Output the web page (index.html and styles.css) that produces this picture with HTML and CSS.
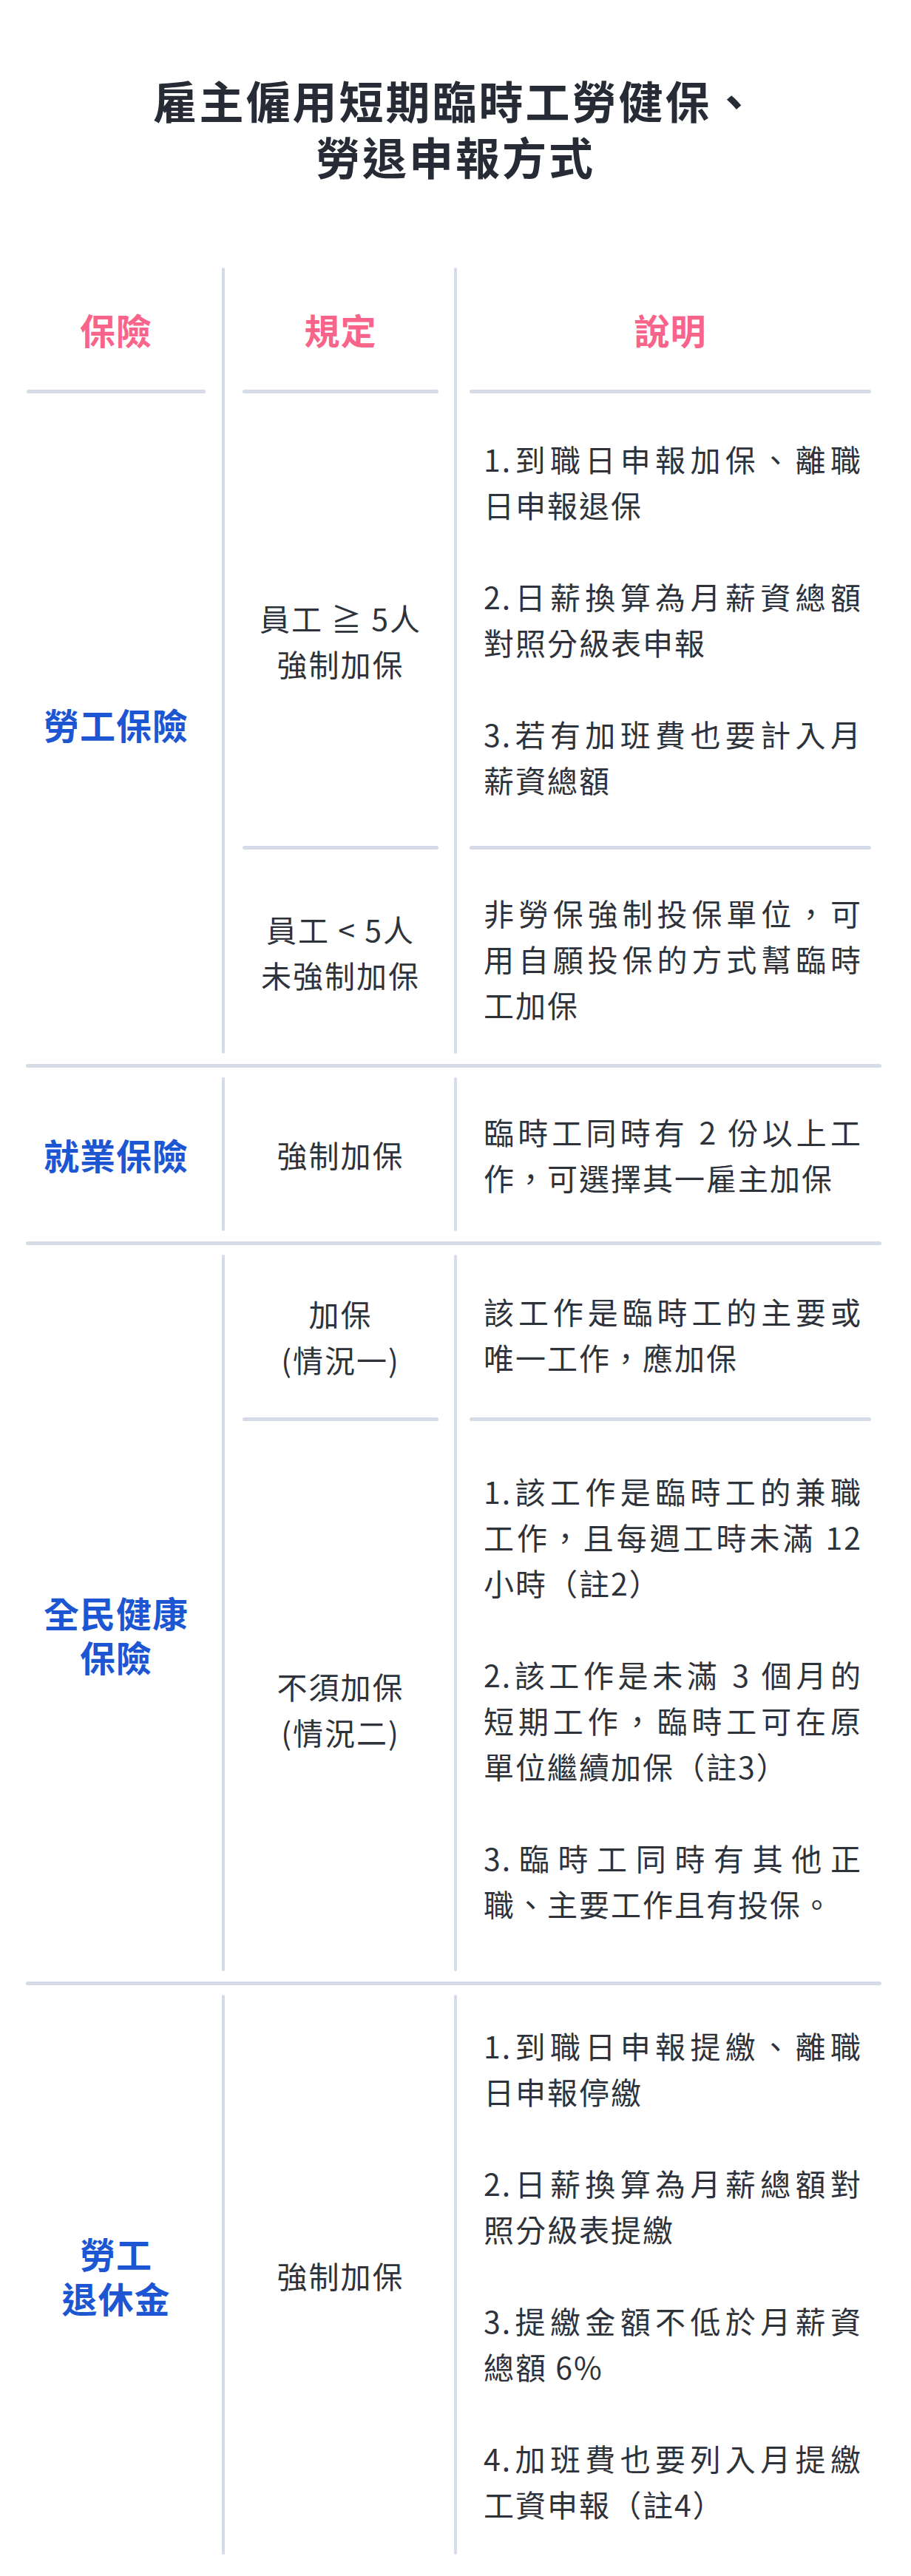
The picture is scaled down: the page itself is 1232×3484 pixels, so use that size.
FILE: index.html
```html
<!DOCTYPE html>
<html lang="zh-Hant">
<head>
<meta charset="utf-8">
<title>雇主僱用短期臨時工勞健保、勞退申報方式</title>
<link rel="stylesheet" href="styles.css">
</head>
<body>
<main class="page">
  <h1 class="title">雇主僱用短期臨時工勞健保、<br>勞退申報方式</h1>

  <section class="table">
    <div class="group g1">
      <div class="vl a"></div>
      <div class="vl b"></div>

      <div class="c1 r1 head">保險</div>
      <div class="c2 r1 head">規定</div>
      <div class="c3 r1 head">說明</div>
      <div class="hl x1 r2"></div>
      <div class="hl x2 r2"></div>
      <div class="hl x3 r2"></div>

      <div class="c1 r3to5 name">勞工保險</div>

      <div class="c2 r3 rule shift-lg">員工 ≧ 5人<br>強制加保</div>
      <div class="c3 r3 txt p-1a">
        <p><span>1.到職日申報加保、離職</span><span>日申報退保</span></p>
        <p><span>2.日薪換算為月薪資總額</span><span>對照分級表申報</span></p>
        <p><span>3.若有加班費也要計入月</span><span>薪資總額</span></p>
      </div>
      <div class="hl x2 r4"></div>
      <div class="hl x3 r4"></div>

      <div class="c2 r5 rule">員工 &lt; 5人<br>未強制加保</div>
      <div class="c3 r5 txt p-1b">
        <p><span>非勞保強制投保單位，可</span><span>用自願投保的方式幫臨時</span><span>工加保</span></p>
      </div>
    </div>

    <div class="rowline"></div>

    <div class="group g2">
      <div class="vl a"></div>
      <div class="vl b"></div>
      <div class="c1 r1 name">就業保險</div>
      <div class="c2 r1 rule">強制加保</div>
      <div class="c3 r1 txt p-2">
        <p><span>臨時工同時有 2 份以上工</span><span>作，可選擇其一雇主加保</span></p>
      </div>
    </div>

    <div class="rowline"></div>

    <div class="group g3">
      <div class="vl a"></div>
      <div class="vl b"></div>
      <div class="c1 rall name shift-lg">全民健康<br>保險</div>

      <div class="c2 r1 rule">加保<br>(情況一)</div>
      <div class="c3 r1 txt p-3a">
        <p><span>該工作是臨時工的主要或</span><span>唯一工作，應加保</span></p>
      </div>
      <div class="hl x2 r2"></div>
      <div class="hl x3 r2"></div>

      <div class="c2 r3 rule shift-sm">不須加保<br>(情況二)</div>
      <div class="c3 r3 txt p-3b">
        <p><span>1.該工作是臨時工的兼職</span><span>工作，且每週工時未滿 12</span><span>小時（註2）</span></p>
        <p><span>2.該工作是未滿 3 個月的</span><span>短期工作，臨時工可在原</span><span>單位繼續加保（註3）</span></p>
        <p><span>3.臨時工同時有其他正</span><span>職、主要工作且有投保。</span></p>
      </div>
    </div>

    <div class="rowline"></div>

    <div class="group g4">
      <div class="vl a"></div>
      <div class="vl b"></div>
      <div class="c1 r1 name">勞工<br>退休金</div>
      <div class="c2 r1 rule">強制加保</div>
      <div class="c3 r1 txt p-4">
        <p><span>1.到職日申報提繳、離職</span><span>日申報停繳</span></p>
        <p><span>2.日薪換算為月薪總額對</span><span>照分級表提繳</span></p>
        <p><span>3.提繳金額不低於月薪資</span><span>總額 6%</span></p>
        <p><span>4.加班費也要列入月提繳</span><span>工資申報（註4）</span></p>
      </div>
    </div>
  </section>
</main>
</body>
</html>
```

FILE: styles.css
```css
:root {
  --ink: #262b36;
  --text: #2d323b;
  --pink: #f9648a;
  --blue: #1d56d3;
  --line: #d5dce8;
}

* { box-sizing: border-box; }

html, body {
  margin: 0;
  padding: 0;
  background: #ffffff;
}

body {
  font-family: "Noto Sans CJK TC", "Noto Sans", "Liberation Sans", sans-serif;
  color: var(--text);
  text-autospace: no-autospace;
}

.page {
  width: 1232px;
  padding-bottom: 29px;
}

.title {
  margin: 0 0 113px;
  padding-top: 97px;
  font-size: 60px;
  line-height: 76px;
  font-weight: 700;
  letter-spacing: 3px;
  color: var(--ink);
  text-align: center;
}

.table {
  margin: 0 40px 0 35px;
}

.group {
  display: grid;
  grid-template-columns: 265px 4px 310px 4px 574px;
}

.g1 { grid-template-rows: 165px 5px auto 5px auto; }
.g2 { grid-template-rows: auto; }
.g3 { grid-template-rows: auto 5px auto; }
.g4 { grid-template-rows: auto; }

.group > * { min-width: 0; }

.vl {
  grid-row: 1 / -1;
  background: var(--line);
  border-radius: 2px;
}
.vl.a { grid-column: 2; }
.vl.b { grid-column: 4; }

.r1 { grid-row: 1; }
.r2 { grid-row: 2; }
.r3 { grid-row: 3; }
.r4 { grid-row: 4; }
.r5 { grid-row: 5; }
.r3to5 { grid-row: 3 / 6; }
.rall { grid-row: 1 / -1; }

.c1 { grid-column: 1; margin: 0 22px 0 1px; }
.c2 { grid-column: 3; margin: 0 21px 0 24px; }
.c3 { grid-column: 5; margin: 0 14px 0 17px; }

.hl {
  height: 5px;
  background: var(--line);
  border-radius: 3px;
}
.hl.x1 { grid-column: 1; margin: 0 22px 0 1px; }
.hl.x2 { grid-column: 3; margin: 0 21px 0 24px; }
.hl.x3 { grid-column: 5; margin: 0 14px 0 17px; }

.head,
.name,
.rule {
  display: flex;
  flex-direction: column;
  justify-content: center;
  align-items: center;
  text-align: center;
}

.head {
  font-size: 48px;
  line-height: 60px;
  font-weight: 700;
  letter-spacing: 1px;
  color: var(--pink);
}

.name {
  font-size: 48px;
  line-height: 60px;
  font-weight: 700;
  letter-spacing: 1px;
  color: var(--blue);
}

.rule {
  font-size: 41px;
  line-height: 62px;
  letter-spacing: 2px;
  color: var(--text);
}

.shift-lg { padding-top: 56px; }
.shift-sm { padding-top: 34px; }

.txt {
  width: 543px;
  justify-self: start;
  padding-left: 19px;
  padding-right: 12px;
  font-size: 41px;
  line-height: 62px;
  letter-spacing: 2px;
  color: var(--text);
  text-align: left;
}

.txt p {
  margin: 0 0 62px;
}
.txt p:last-child { margin-bottom: 0; }

.txt span {
  display: block;
  text-align: justify;
  text-align-last: justify;
}
.txt span:last-child { text-align-last: left; }

.p-1a { padding-top: 57px; padding-bottom: 59px; }
.p-1b { padding-top: 54px; padding-bottom: 36px; }
.p-2 { padding-top: 42px; padding-bottom: 42px; }
.p-3a { padding-top: 45px; padding-bottom: 51px; }
.p-3b { padding-top: 63px; padding-bottom: 61px; }
.p-4 { padding-top: 37px; padding-bottom: 38px; }

.rowline {
  height: 5px;
  margin: 14px 0 13px;
  background: var(--line);
  border-radius: 3px;
}
```
